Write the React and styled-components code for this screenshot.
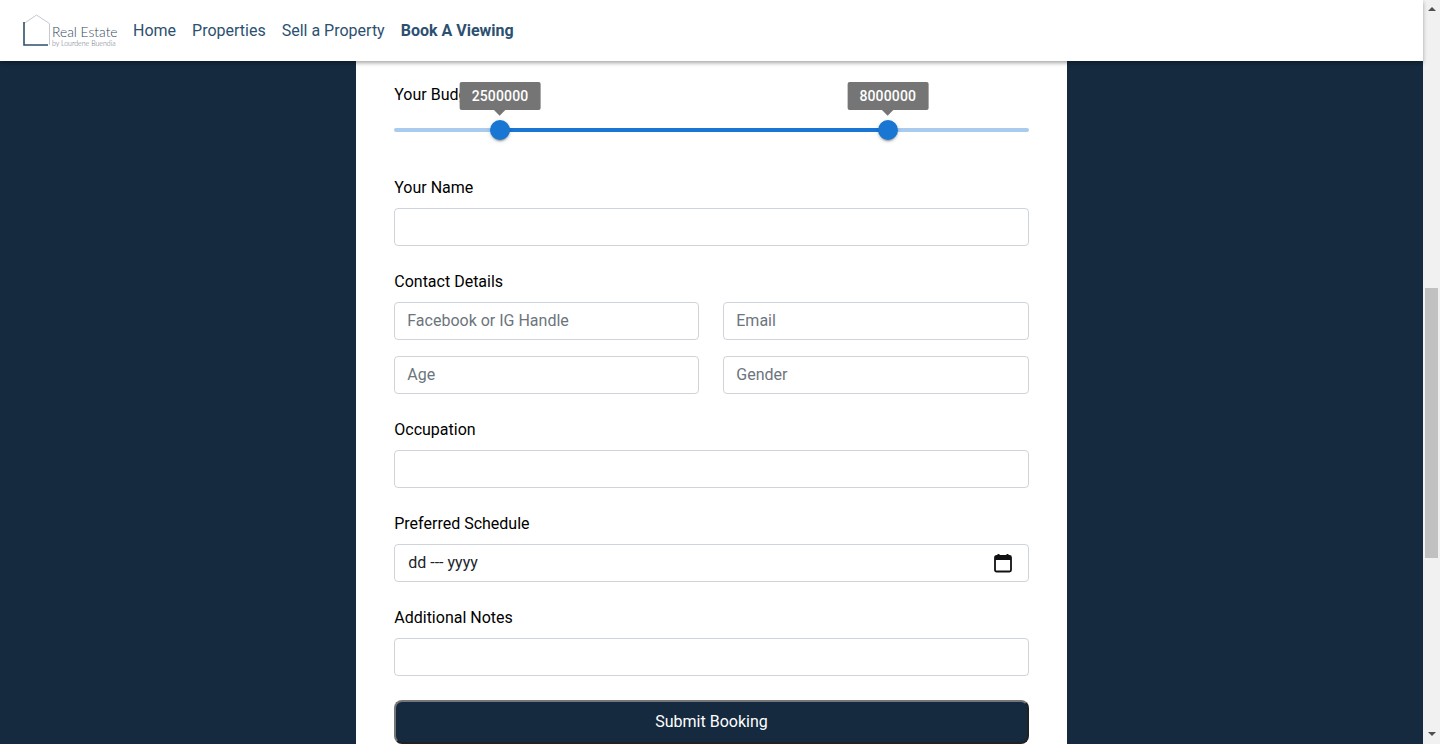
import styled, { createGlobalStyle } from "styled-components"

const NAVY = "#152a3f"
const SLIDER_MIN = 1000000
const SLIDER_MAX = 10000000
const budget = [2500000, 8000000]

function percent(value) {
  return ((value - SLIDER_MIN) / (SLIDER_MAX - SLIDER_MIN)) * 100
}

function BudgetSlider() {
  const from = percent(budget[0])
  const to = percent(budget[1])

  return (
    <Slider>
      <Rail />
      <Track style={{ left: `${from}%`, width: `${to - from}%` }} />
      {budget.map((value) => (
        <Thumb key={value} style={{ left: `${percent(value)}%` }}>
          <Bubble>{value}</Bubble>
        </Thumb>
      ))}
    </Slider>
  )
}

function Logo() {
  return (
    <Brand>
      <svg width="30" height="34" viewBox="0 0 30 34" fill="none">
        <path d="M2 9.5 L14.5 1 L27.5 9.5 V31" stroke="#c3cad1" strokeWidth="1" />
        <path d="M2 8 V31 H26" stroke="#2f4f6b" strokeWidth="1.6" />
      </svg>
      <BrandText>
        <BrandName>Real Estate</BrandName>
        <BrandSub>by Lourdene Buendia</BrandSub>
      </BrandText>
    </Brand>
  )
}

export default function App() {
  return (
    <Screen>
      <GlobalStyle />
      <Page>
        <Navbar>
          <Logo />
          <NavLinks>
            <NavLink href="#home">Home</NavLink>
            <NavLink href="#properties">Properties</NavLink>
            <NavLink href="#sell">Sell a Property</NavLink>
            <NavLink href="#book" $active>Book A Viewing</NavLink>
          </NavLinks>
        </Navbar>
        <Card>
          <Group $gap={21}>
            <Label>Your Budget</Label>
            <BudgetSlider />
          </Group>
          <Group>
            <Label>Your Name</Label>
            <Input />
          </Group>
          <Group>
            <Label>Contact Details</Label>
            <FieldGrid>
              <Input placeholder="Facebook or IG Handle" />
              <Input placeholder="Email" />
              <Input placeholder="Age" />
              <Input placeholder="Gender" />
            </FieldGrid>
          </Group>
          <Group>
            <Label>Occupation</Label>
            <Input />
          </Group>
          <Group>
            <Label>Preferred Schedule</Label>
            <DateField>
              <span>dd --- yyyy</span>
              <svg width="18" height="20" viewBox="0 0 18 20" fill="none">
                <path d="M4.5 1 V4 M13.5 1 V4" stroke="#111" strokeWidth="2" />
                <rect x="1" y="3" width="16" height="15.5" rx="1.5" stroke="#111" strokeWidth="1.8" />
                <rect x="1" y="3" width="16" height="4" fill="#111" />
              </svg>
            </DateField>
          </Group>
          <Group>
            <Label>Additional Notes</Label>
            <Input />
          </Group>
          <SubmitButton>Submit Booking</SubmitButton>
        </Card>
      </Page>
      <Scrollbar>
        <ArrowUp />
        <ScrollThumb />
        <ArrowDown />
      </Scrollbar>
    </Screen>
  )
}

const GlobalStyle = createGlobalStyle`
  html, body {
    margin: 0;
    height: 100%;
    overflow: hidden;
    font-family: Roboto, sans-serif;
    font-size: 16px;
    color: #000;
  }
  * {
    box-sizing: border-box;
  }
`
const Screen = styled.div`
  display: flex;
  width: 1440px;
  height: 744px;
  overflow: hidden;
`
const Page = styled.main`
  flex: 1;
  min-width: 0;
  display: flex;
  flex-direction: column;
  align-items: center;
  background-color: ${NAVY};
`
const Navbar = styled.nav`
  position: relative;
  z-index: 2;
  flex: 0 0 61px;
  width: 100%;
  display: flex;
  align-items: center;
  gap: 15px;
  padding-left: 22px;
  background-color: #fff;
  box-shadow: 0 2px 4px rgba(0, 0, 0, 0.35);
`
const Brand = styled.div`
  display: flex;
  align-items: flex-end;
  width: 96px;
  height: 34px;
`
const BrandText = styled.div`
  display: flex;
  flex-direction: column;
  margin-bottom: 1px;
`
const BrandName = styled.span`
  font-family: Lato, sans-serif;
  font-size: 13.8px;
  font-weight: 300;
  line-height: 14px;
  color: #33475a;
  white-space: nowrap;
`
const BrandSub = styled.span`
  font-family: Lato, sans-serif;
  font-size: 7px;
  font-weight: 300;
  line-height: 8px;
  color: #5a6b7b;
  white-space: nowrap;
`
const NavLinks = styled.div`
  display: flex;
  gap: 16px;
`
const NavLink = styled.a`
  font-size: 16px;
  line-height: 24px;
  text-decoration: none;
  color: #2c5070;
  font-weight: ${(props) => (props.$active ? 700 : 400)};
`
const Card = styled.section`
  flex: 1;
  width: 710.5px;
  display: flex;
  flex-direction: column;
  gap: 24px;
  padding: 22px 38px 0;
  background-color: #fff;
`
const Group = styled.div`
  display: flex;
  flex-direction: column;
  gap: ${(props) => (props.$gap ? props.$gap : 8)}px;
`
const Label = styled.label`
  font-size: 16px;
  line-height: 24px;
`
const Input = styled.input`
  width: 100%;
  height: 38px;
  padding: 5px 12px 7px;
  font-family: Roboto, sans-serif;
  font-size: 16px;
  color: #212529;
  background-color: #fff;
  border: 1px solid #ced4da;
  border-radius: 4px;
  outline: none;

  &::placeholder {
    color: #6c757d;
    opacity: 1;
  }
`
const FieldGrid = styled.div`
  display: grid;
  grid-template-columns: 305fr 305.5fr;
  gap: 16px 24px;
`
const DateField = styled.div`
  display: flex;
  align-items: center;
  justify-content: space-between;
  height: 38px;
  padding: 0 16px 2px 13px;
  color: #212529;
  border: 1px solid #ced4da;
  border-radius: 4px;

  svg {
    margin-bottom: -2px;
  }
`
const SubmitButton = styled.button`
  flex: 0 0 44px;
  width: 100%;
  padding: 0 0 2px;
  font-family: Roboto, sans-serif;
  font-size: 16px;
  font-weight: 400;
  color: #fff;
  background-color: ${NAVY};
  border: 2px outset #767676;
  border-radius: 8px;
`
const Slider = styled.div`
  position: relative;
  height: 4px;
  margin-bottom: 20px;
`
const Rail = styled.div`
  height: 4px;
  border-radius: 2px;
  background-color: #1976d2;
  opacity: 0.38;
`
const Track = styled.div`
  position: absolute;
  top: 0;
  height: 4px;
  background-color: #1976d2;
`
const Thumb = styled.div`
  position: absolute;
  top: -8px;
  width: 20px;
  height: 20px;
  margin-left: -10px;
  border-radius: 50%;
  background-color: #1976d2;
  box-shadow: 0 3px 1px -2px rgba(0, 0, 0, 0.2), 0 2px 2px 0 rgba(0, 0, 0, 0.14), 0 1px 5px 0 rgba(0, 0, 0, 0.12);
`
const Bubble = styled.div`
  position: absolute;
  left: 50%;
  bottom: 30px;
  transform: translateX(-50%);
  padding: 0 12px;
  font-size: 14px;
  font-weight: 500;
  line-height: 28px;
  letter-spacing: 0.15px;
  color: #fff;
  background-color: #757575;
  border-radius: 2px;

  &::after {
    content: "";
    position: absolute;
    left: 50%;
    bottom: -4px;
    width: 8px;
    height: 8px;
    background-color: #757575;
    transform: translateX(-50%) rotate(45deg);
  }
`
const Scrollbar = styled.aside`
  flex: 0 0 17px;
  display: flex;
  flex-direction: column;
  align-items: center;
  background-color: #f1f1f1;
`
const ArrowUp = styled.div`
  width: 0;
  height: 0;
  margin-top: 7px;
  border-left: 4px solid transparent;
  border-right: 4px solid transparent;
  border-bottom: 4px solid #505050;
`
const ArrowDown = styled.div`
  width: 0;
  height: 0;
  margin-top: 174px;
  border-left: 4px solid transparent;
  border-right: 4px solid transparent;
  border-top: 4px solid #505050;
`
const ScrollThumb = styled.div`
  width: 13px;
  height: 270px;
  margin-top: 277px;
  background-color: #c1c1c1;
`
